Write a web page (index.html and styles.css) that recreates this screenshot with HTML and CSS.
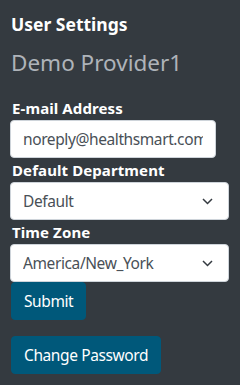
FILE: index.html
```html
<!DOCTYPE html>
<html lang="en">
<head>
  <meta charset="UTF-8">
  <meta name="viewport" content="width=device-width, initial-scale=1.0">
  <title>User Settings</title>
  <link rel="stylesheet" href="styles.css">
</head>
<body>
  <div class="settings">
    <h5 class="title">User Settings</h5>
    <h4 class="subtitle">Demo Provider1</h4>
    <form class="settings-form">
      <div class="group first">
        <label for="email">E-mail Address</label>
        <input type="text" id="email" class="field email" value="noreply@healthsmart.com">
      </div>
      <div class="group">
        <label for="dept">Default Department</label>
        <div class="select-wrap">
          <select id="dept" class="field">
            <option>Default</option>
          </select>
          <svg class="chevron" width="11" height="7" viewBox="0 0 11 7"><path d="M1 1l4.5 4.5L10 1" fill="none" stroke="#343a40" stroke-width="1.5"/></svg>
        </div>
      </div>
      <div class="group">
        <label for="tz">Time Zone</label>
        <div class="select-wrap">
          <select id="tz" class="field">
            <option>America/New_York</option>
          </select>
          <svg class="chevron" width="11" height="7" viewBox="0 0 11 7"><path d="M1 1l4.5 4.5L10 1" fill="none" stroke="#343a40" stroke-width="1.5"/></svg>
        </div>
      </div>
      <button type="submit" class="btn">Submit</button>
    </form>
    <button type="button" class="btn change">Change Password</button>
  </div>
</body>
</html>
```
FILE: styles.css
```css
body { margin: 0; background: #343a40; font-family: "Noto Sans", "Open Sans", sans-serif; }
.settings { padding: 13px 11px 0 10px; }
.title { margin: 0; font-size: 17.5px; line-height: 22px; font-weight: 700; color: #fff; padding-left: 1px; }
.subtitle { margin: 14px 0 0; font-size: 22.5px; line-height: 28px; font-weight: 400; color: #aeb3b9; padding-left: 1px; }
.settings-form { margin: 0; }
.group { margin-top: 3px; }
.group.first { margin-top: 22px; }
label { display: block; font-size: 15px; line-height: 18px; font-weight: 700; letter-spacing: 0.1px; color: #fff; margin-bottom: 3px; padding-left: 2px; }
.field { display: block; box-sizing: border-box; width: 100%; height: 38px; padding: 0 12px; font-family: inherit; font-size: 15.5px; letter-spacing: -0.4px; color: #495057; background: #fff; border: 1px solid #ced4da; border-radius: 4px; margin: 0; }
.field.email { width: 206px; }
select.field { appearance: none; -webkit-appearance: none; padding-right: 28px; }
.select-wrap { position: relative; }
.chevron { position: absolute; right: 16px; top: 50%; margin-top: -3px; pointer-events: none; }
.btn { display: block; box-sizing: border-box; height: 38px; padding: 0 12px; margin-left: 1px; font-family: inherit; font-size: 15.5px; letter-spacing: -0.4px; color: #fff; background: #00587a; border: 1px solid #00587a; border-radius: 4px; }
.btn.change { margin-top: 16px; }
```
